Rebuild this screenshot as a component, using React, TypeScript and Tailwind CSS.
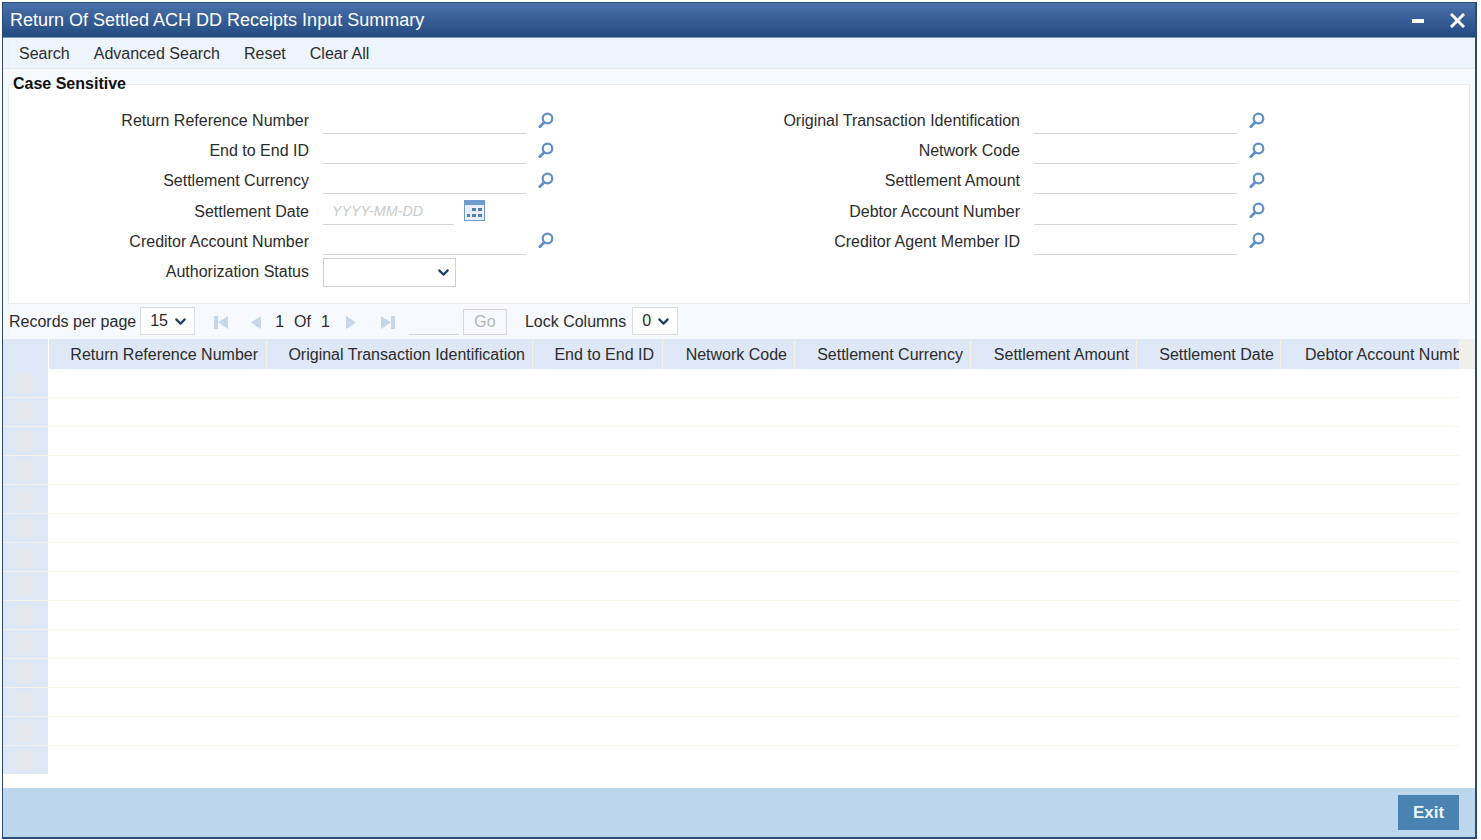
import React from 'react';
import { ChevronDown } from 'lucide-react';

const leftFields = ['Return Reference Number', 'End to End ID', 'Settlement Currency', 'Settlement Date', 'Creditor Account Number', 'Authorization Status'];
const rightFields = ['Original Transaction Identification', 'Network Code', 'Settlement Amount', 'Debtor Account Number', 'Creditor Agent Member ID'];
const columns = [
  { name: 'Return Reference Number', cls: 'w-[218px] pr-[8px]' },
  { name: 'Original Transaction Identification', cls: 'w-[266px] pr-[7px]' },
  { name: 'End to End ID', cls: 'w-[130px] pr-[8px]' },
  { name: 'Network Code', cls: 'w-[132px] pr-[7px]' },
  { name: 'Settlement Currency', cls: 'w-[176px] pr-[7px]' },
  { name: 'Settlement Amount', cls: 'w-[166px] pr-[7px]' },
  { name: 'Settlement Date', cls: 'w-[144px] pr-[6px]' },
];
const rows = Array.from({ length: 14 }, (_, i) => i);

const Lookup = () => (
  <svg width="16" height="16" viewBox="0 0 16 16" fill="none" stroke="#5f8fc9">
    <circle cx="9.500" cy="6.500" r="4.800" strokeWidth="2.200" />
    <path d="M6 10.500 1.800 14.800" strokeWidth="2.800" strokeLinecap="round" />
  </svg>
);

const TextRow = () => (
  <div className="flex items-center">
    <div className="w-[203px] h-[28px] border-b border-[#d4d4d4]" />
    <div className="ml-[12px] w-[16px] flex justify-center -mt-[1px]"><Lookup /></div>
  </div>
);

const CalendarIcon = () => (
  <svg width="21" height="21" viewBox="0 0 21 21" className="ml-[10px] -mt-[1px]">
    <rect x="0.5" y="0.5" width="20" height="20" fill="#e8eff9" stroke="#6f9bd1" />
    <rect x="0" y="0" width="21" height="5" fill="#6f9bd1" />
    <rect x="8" y="8" width="4" height="3" fill="#4f7fb8" />
    <rect x="14" y="8" width="4" height="3" fill="#4f7fb8" />
    <rect x="3" y="14" width="3" height="3" fill="#4f7fb8" />
    <rect x="8" y="14" width="4" height="3" fill="#4f7fb8" />
    <rect x="14" y="14" width="4" height="3" fill="#4f7fb8" />
  </svg>
);

const PagerIcon = ({ dir, bar }: { dir: 'left' | 'right'; bar?: boolean }) => (
  <svg width="16" height="16" viewBox="0 0 16 16" className="text-[#c5d5ea]" fill="currentColor">
    {dir === 'left' ? (
      <>
        {bar && <rect x="1" y="2" width="4" height="13" />}
        <path d="M15 2v13L5 8.500z" />
      </>
    ) : (
      <>
        <path d="M1 2v13l10-6.500z" />
        {bar && <rect x="11" y="2" width="4" height="13" />}
      </>
    )}
  </svg>
);

const SmallSelect = ({ value, width }: { value: string; width: string }) => (
  <div className={`${width} h-[28px] -mt-[1px] bg-white border border-[#d9dde3] flex items-center justify-between pl-[9px] pr-[5px]`}>
    <span>{value}</span>
    <ChevronDown size={17} strokeWidth={3} className="text-[#1c3f66]" />
  </div>
);

export default function App() {
  return (
    <div className="w-[1481px] h-[840px] bg-white pt-[2px] pl-[2px] font-['Liberation_Sans',Arial,sans-serif] text-[16px] text-[#2c2c2c] overflow-hidden">
      <div className="w-[1475px] h-[837px] border-l border-r-2 border-b-2 border-t border-[#2b4a75] flex flex-col bg-white">
        <div className="h-[35px] shrink-0 bg-gradient-to-b from-[#4a72ab] to-[#234a80] border-b border-[#7d97bb] flex items-center justify-between pl-[7px] pr-[10px] text-white text-[18px]">
          <span>Return Of Settled ACH DD Receipts Input Summary</span>
          <div className="flex items-center gap-[26px]">
            <div className="w-[12px] h-[4px] bg-white mt-[1px]" />
            <svg width="15" height="15" viewBox="0 0 15 15" stroke="white" strokeWidth="3" className="mt-[1px]"><path d="M1 1l13 13M14 1 1 14" /></svg>
          </div>
        </div>

        <div className="h-[31px] shrink-0 bg-[#edf4fd] border-b border-[#e4e8ee] flex items-center gap-[24px] pl-[16px] pt-[1px]">
          <span>Search</span>
          <span>Advanced Search</span>
          <span>Reset</span>
          <span>Clear All</span>
        </div>

        <div className="h-[235px] shrink-0 bg-[#f6f9fe] pt-[15px] pl-[5px] pr-[5px] relative">
          <span className="absolute left-[10px] top-[3px] font-bold text-[#111]">Case Sensitive</span>
          <div className="h-[220px] bg-white border border-[#e6e9ee] pt-[20px] grid grid-cols-[auto_auto] justify-start">
            <div className="flex flex-col w-[710px]">
              {leftFields.map((label) => (
                <div key={label} className="h-[30.200px] flex items-center">
                  <label className="w-[300px] text-right shrink-0 pt-[2px]">{label}</label>
                  <div className="ml-[14px]">
                    {label === 'Settlement Date' ? (
                      <div className="flex items-center">
                        <div className="w-[131px] h-[28px] border-b border-[#d4d4d4] pl-[9px] pt-[3px] flex items-center italic text-[14.300px] text-[#c9c9c9]">YYYY-MM-DD</div>
                        <CalendarIcon />
                      </div>
                    ) : label === 'Authorization Status' ? (
                      <div className="w-[133px] h-[29px] border border-[#cfcfcf] flex items-center justify-end pr-[3px] mt-[2px]">
                        <ChevronDown size={17} strokeWidth={3} className="text-[#1c3f66]" />
                      </div>
                    ) : (
                      <TextRow />
                    )}
                  </div>
                </div>
              ))}
            </div>
            <div className="flex flex-col">
              {rightFields.map((label) => (
                <div key={label} className="h-[30.200px] flex items-center">
                  <label className="w-[301px] text-right shrink-0 pt-[2px]">{label}</label>
                  <div className="ml-[14px]"><TextRow /></div>
                </div>
              ))}
            </div>
          </div>
        </div>

        <div className="h-[35px] shrink-0 bg-[#f6f9fe] flex items-center pl-[6px]">
          <span>Records per page</span>
          <div className="ml-[4px]"><SmallSelect value="15" width="w-[55px]" /></div>
          <div className="ml-[18px] flex items-center"><PagerIcon dir="left" bar /></div>
          <div className="ml-[17px]"><PagerIcon dir="left" /></div>
          <span className="ml-[13px]">1</span>
          <span className="ml-[10px]">Of</span>
          <span className="ml-[10px]">1</span>
          <div className="ml-[15px]"><PagerIcon dir="right" /></div>
          <div className="ml-[19px]"><PagerIcon dir="right" bar /></div>
          <div className="ml-[13px] w-[50px] h-[26px] border-b border-[#d4d4d4]" />
          <div className="ml-[4px] w-[44px] h-[26px] border border-[#d4d8de] flex items-center justify-center text-[#b5b5b5]">Go</div>
          <span className="ml-[18px]">Lock Columns</span>
          <div className="ml-[6px]"><SmallSelect value="0" width="w-[46px]" /></div>
        </div>

        <div className="flex-1 flex flex-col min-h-0 bg-white">
          <div className="h-[30px] shrink-0 flex bg-[#efefec]">
            <div className="w-[46px] bg-[#dde7f6] border-r border-white" />
            {columns.map((c) => (
              <div key={c.name} className={`${c.cls} bg-[#dde7f6] border-r border-[#f5f1e6] h-full pt-[1px] flex items-center justify-end whitespace-nowrap`}>{c.name}</div>
            ))}
            <div className="w-[178px] bg-[#dde7f6] h-full pt-[1px] overflow-hidden flex items-center pl-[24px] whitespace-nowrap">Debtor Account Number</div>
          </div>
          {rows.map((r) => (
            <div key={r} className={`${r === 13 ? 'h-[28px]' : 'h-[29px]'} shrink-0 flex w-[1456px]`}>
              <div className={`w-[45px] bg-[#dde7f6] flex justify-center pt-[4px] pb-[3px] ${r === 13 ? '' : 'border-b border-[#f5efe6]'}`}>
                <div className="w-[18px] mr-[3px] bg-[#e4e7ee]" />
              </div>
              <div className={`flex-1 ${r === 13 ? '' : 'border-b border-[#faf6e9]'}`} />
            </div>
          ))}
        </div>

        <div className="h-[49px] shrink-0 bg-[#bcd7ed] flex items-center justify-end pr-[16px]">
          <div className="w-[61px] h-[35px] bg-[#4a82b2] text-[#eaf4fb] font-bold text-[17px] flex items-center justify-center">Exit</div>
        </div>
      </div>
    </div>
  );
}
